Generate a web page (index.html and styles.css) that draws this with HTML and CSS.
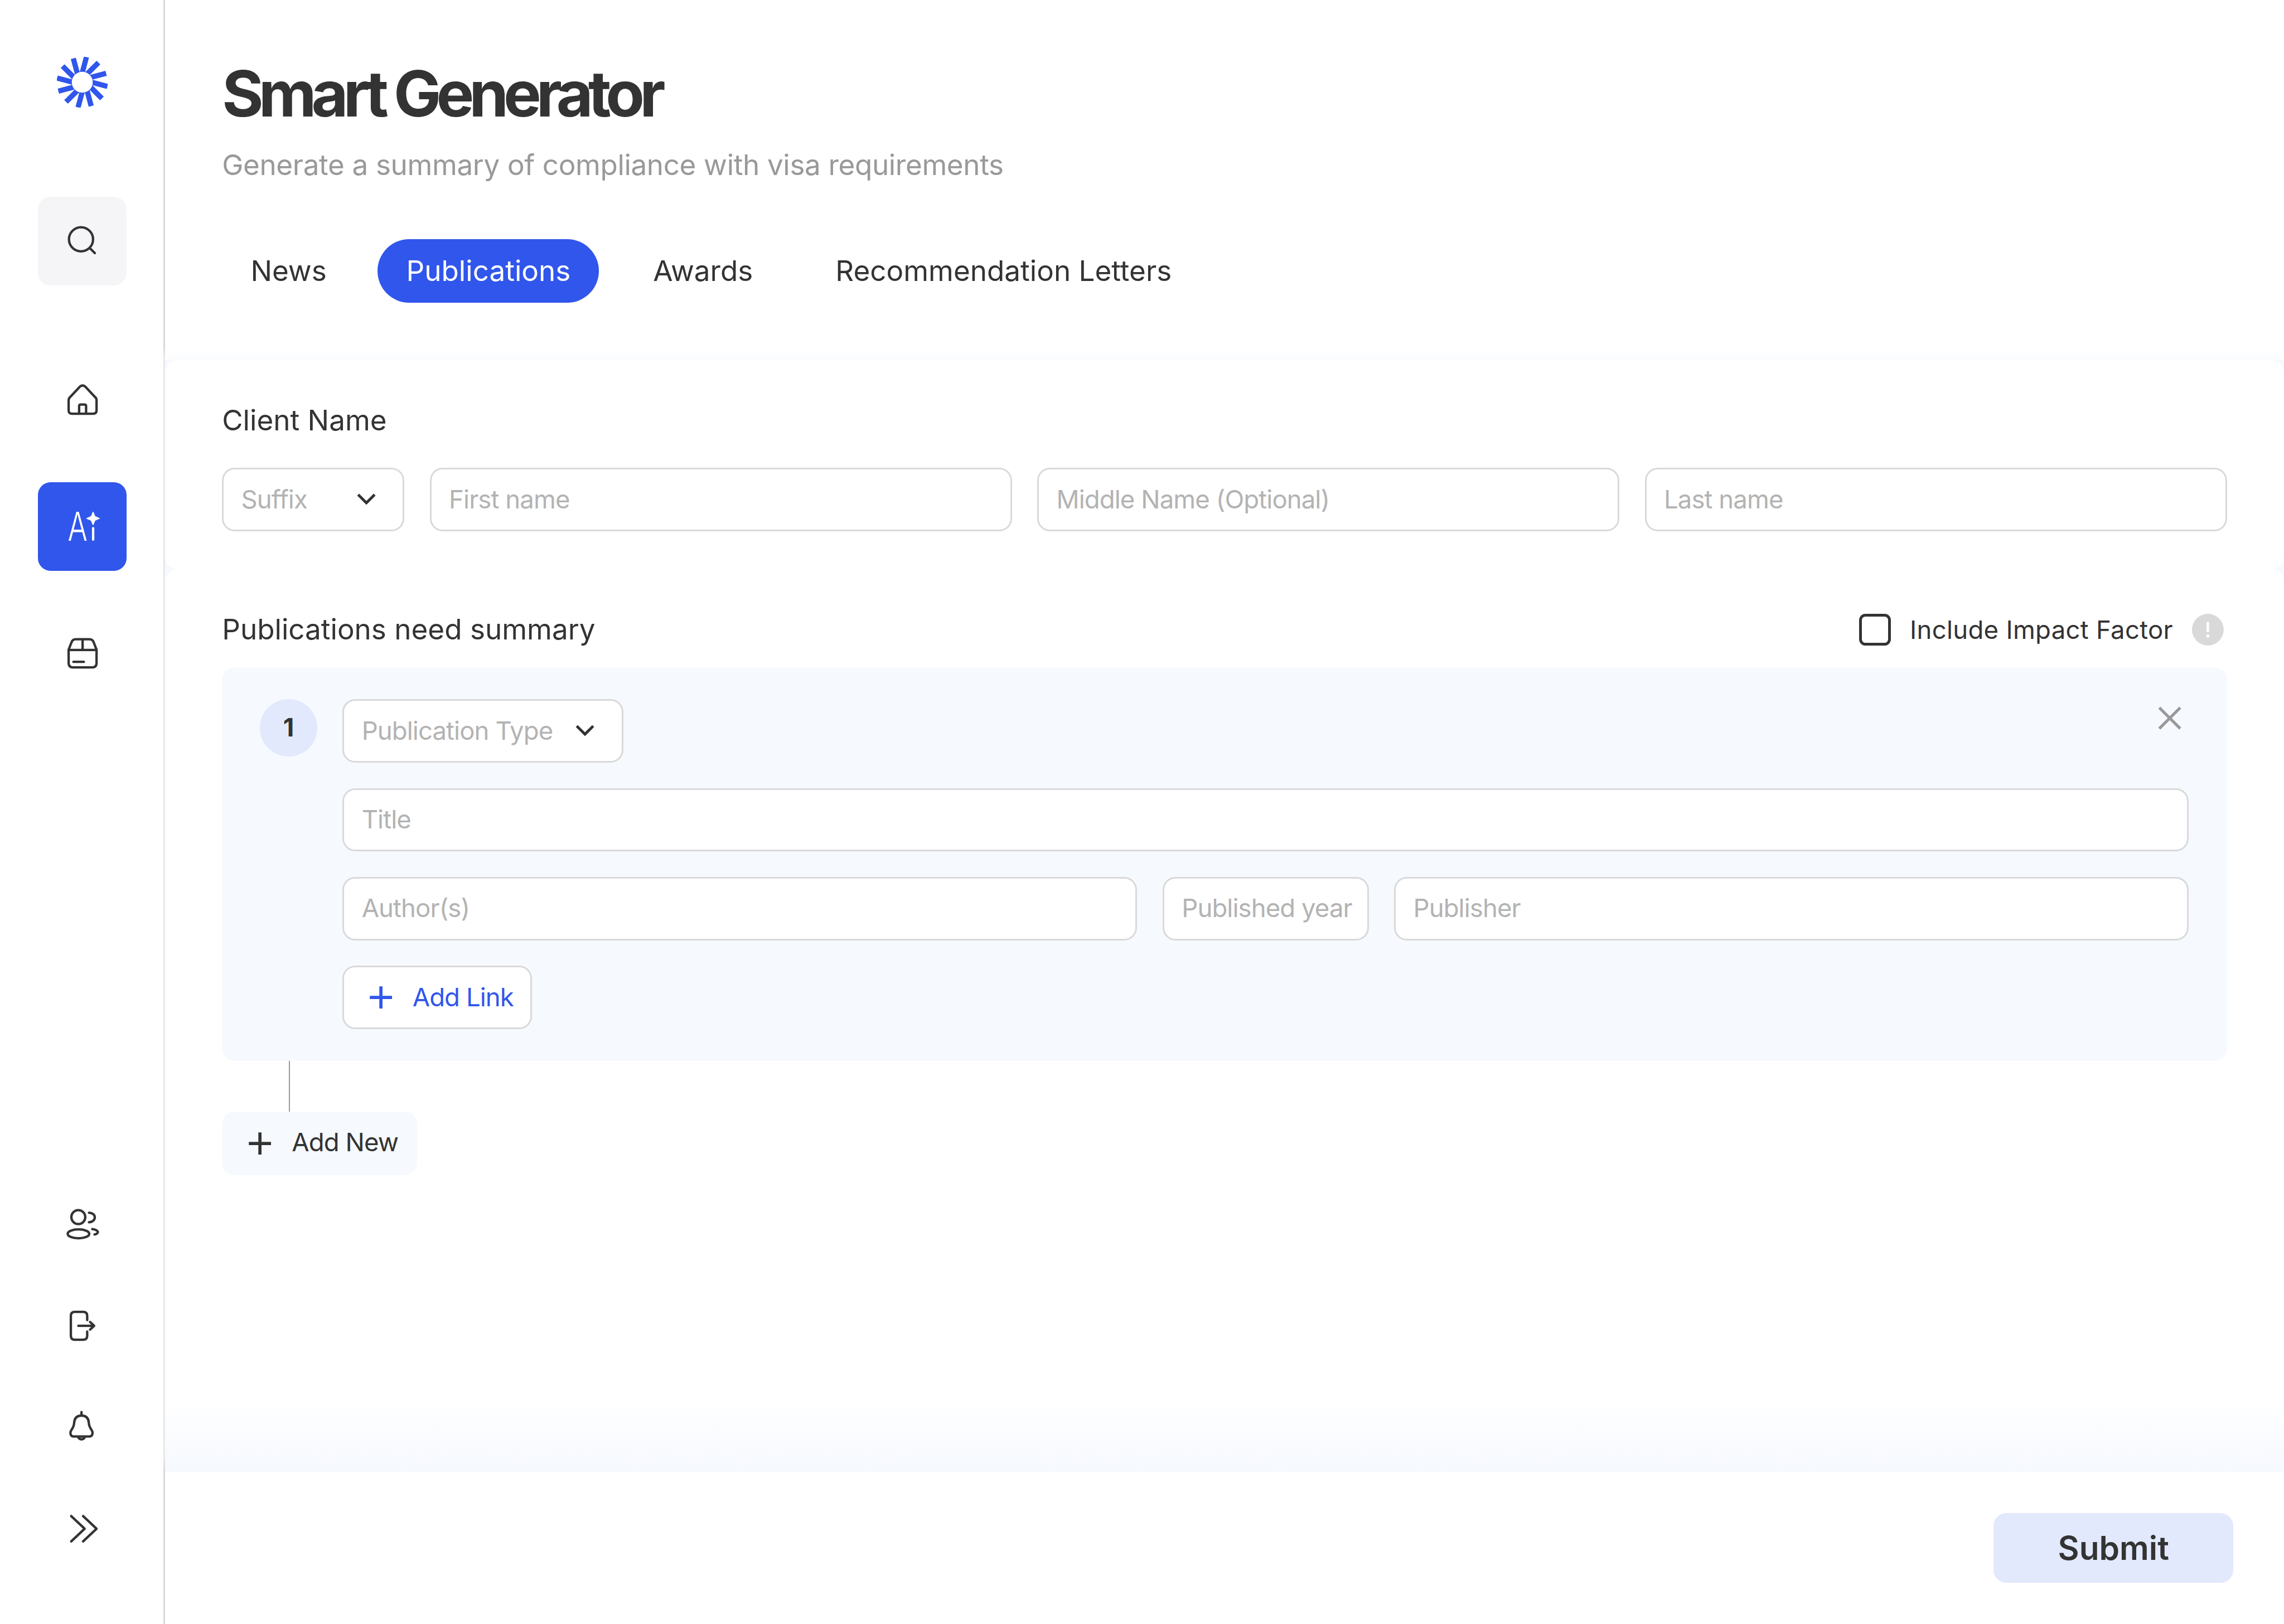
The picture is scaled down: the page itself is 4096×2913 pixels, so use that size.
FILE: index.html
```html
<!DOCTYPE html>
<html lang="en">
<head>
<meta charset="utf-8">
<title>Smart Generator</title>
<link rel="stylesheet" href="styles.css">
</head>
<body>
<div class="app">
  <aside class="sidebar">
    <div class="logo">
      <svg viewBox="-16 -16 32 32" width="32" height="32">
        <g fill="#3056eb">
          <rect x="-3.2" y="-16" width="3.3" height="12" transform="rotate(15)"/>
          <rect x="-3.2" y="-16" width="3.3" height="12" transform="rotate(45)"/>
          <rect x="-3.2" y="-16" width="3.3" height="12" transform="rotate(75)"/>
          <rect x="-3.2" y="-16" width="3.3" height="12" transform="rotate(105)"/>
          <rect x="-3.2" y="-16" width="3.3" height="12" transform="rotate(135)"/>
          <rect x="-3.2" y="-16" width="3.3" height="12" transform="rotate(165)"/>
          <rect x="-3.2" y="-16" width="3.3" height="12" transform="rotate(195)"/>
          <rect x="-3.2" y="-16" width="3.3" height="12" transform="rotate(225)"/>
          <rect x="-3.2" y="-16" width="3.3" height="12" transform="rotate(255)"/>
          <rect x="-3.2" y="-16" width="3.3" height="12" transform="rotate(285)"/>
          <rect x="-3.2" y="-16" width="3.3" height="12" transform="rotate(315)"/>
          <rect x="-3.2" y="-16" width="3.3" height="12" transform="rotate(345)"/>
        </g>
        <circle r="6.6" fill="#fff"/>
      </svg>
    </div>
    <div class="side-btn search-btn">
      <svg class="icon" viewBox="0 0 24 24"><circle cx="11" cy="11" r="7.6"/><path d="M16.7 16.7L19.7 19.7"/></svg>
    </div>
    <nav class="side-nav">
      <div class="side-btn">
        <svg class="icon" viewBox="0 0 24 24"><path d="M3.2 18.6V12.2Q3.2 10.9 4.3 10.1L10.4 3.6Q12 2.4 13.6 3.6L19.7 10.1Q20.8 10.9 20.8 12.2V18.6Q20.8 20.8 18.6 20.8H5.4Q3.2 20.8 3.2 18.6Z"/><path d="M9.8 20.8V16Q9.8 15 10.8 15H13.2Q14.2 15 14.2 16V20.8"/></svg>
      </div>
      <div class="side-btn side-btn-active">
        <div class="ai-mark">
          <span class="ai-letter">A</span>
          <svg class="ai-spark" viewBox="0 0 24 24">
            <rect x="17.9" y="12.5" width="1.5" height="8.5" rx=".5" fill="#fff"/>
            <path d="M18.6 3L19.8 5.8 22.6 7 19.8 8.2 18.6 11 17.4 8.2 14.6 7 17.4 5.8Z" fill="#fff" stroke="#fff" stroke-width=".5" stroke-linejoin="round"/>
          </svg>
        </div>
      </div>
      <div class="side-btn">
        <svg class="icon" viewBox="0 0 24 24"><path d="M3.2 9.6L5 5Q5.7 3 7.6 3H16.4Q18.3 3 19 5L20.8 9.6V18Q20.8 20.8 18 20.8H6Q3.2 20.8 3.2 18Z"/><path d="M3.2 9.8H20.8M12 3V9.8M6.2 17.3H12.8"/></svg>
      </div>
    </nav>
    <div class="side-bottom">
      <svg class="icon" viewBox="0 0 24 24"><circle cx="10" cy="7.4" r="4.4"/><ellipse cx="10.1" cy="18" rx="6.8" ry="2.8"/><path d="M16.7 4.7C19 4.7 20.4 6 20.4 7.6S19 10.6 16.7 10.7"/><path d="M18.8 15C20.8 15.2 22.3 16 22.3 16.9S21.3 18.2 20.2 18.4"/></svg>
      <svg class="icon" viewBox="0 0 24 24"><path d="M15.6 8.4V5.6Q15.6 3.2 13 3.2H7.8Q5.3 3.2 5.3 5.6V18.4Q5.3 20.8 7.8 20.8H13Q15.6 20.8 15.6 18.4V15.6"/><path d="M10 12H19.8M17.4 9.6L20 12L17.4 14.4"/></svg>
      <svg class="icon" viewBox="0 0 24 24"><path d="M12 2.4V4.6"/><path d="M12 4.6C8.8 4.6 7.6 6.6 7.4 9C7.3 11 6.6 12.4 5.6 13.8C4.6 15.2 4.9 17.8 7 17.8H17C19.1 17.8 19.4 15.2 18.4 13.8C17.4 12.4 16.7 11 16.6 9C16.4 6.6 15.2 4.6 12 4.6Z"/><path d="M10 18.4C10.6 20 13.4 20 14 18.4"/></svg>
      <svg class="icon" viewBox="0 0 24 24"><path d="M5.5 4L14 12L5.5 20M13 4L21.5 12L13 20"/></svg>
    </div>
  </aside>

  <main class="main">
    <header class="header">
      <h1 class="title">Smart Generator</h1>
      <p class="subtitle">Generate a summary of compliance with visa requirements</p>
      <div class="tabs">
        <span class="tab tab-first">News</span>
        <span class="tab tab-active">Publications</span>
        <span class="tab">Awards</span>
        <span class="tab">Recommendation Letters</span>
      </div>
    </header>

    <div class="content">
      <section class="section">
        <div class="section-head"><h2 class="label">Client Name</h2></div>
        <div class="row row-name">
          <div class="field select"><span>Suffix</span><svg class="chev" viewBox="0 0 12 7"><path d="M.8.8L6 6 11.2.8"/></svg></div>
          <div class="field"><span>First name</span></div>
          <div class="field"><span>Middle Name (Optional)</span></div>
          <div class="field"><span>Last name</span></div>
        </div>
      </section>

      <section class="section section-fill">
        <div class="section-head">
          <h2 class="label">Publications need summary</h2>
          <div class="impact">
            <span class="check"></span>
            <span class="impact-text">Include Impact Factor</span>
            <svg class="info" viewBox="0 0 20 20"><circle cx="10" cy="10" r="10" fill="#d9d9d9"/><rect x="9.2" y="5" width="1.6" height="6.6" rx=".8" fill="#fff"/><circle cx="10" cy="14" r="1" fill="#fff"/></svg>
          </div>
        </div>

        <div class="card">
          <span class="num">1</span>
          <div class="card-body">
            <div class="card-top">
              <div class="field select select-type"><span>Publication Type</span><svg class="chev" viewBox="0 0 12 7"><path d="M.8.8L6 6 11.2.8"/></svg></div>
              <svg class="close" viewBox="0 0 24 24"><path d="M5.4 5.4L18.6 18.6M18.6 5.4L5.4 18.6"/></svg>
            </div>
            <div class="field"><span>Title</span></div>
            <div class="row row-pub">
              <div class="field"><span>Author(s)</span></div>
              <div class="field"><span>Published year</span></div>
              <div class="field"><span>Publisher</span></div>
            </div>
            <div class="add-link">
              <svg class="plus" viewBox="0 0 24 24"><path d="M12 5V19M5 12H19"/></svg>
              <span>Add Link</span>
            </div>
          </div>
        </div>

        <div class="connector"></div>
        <div class="add-new">
          <svg class="plus" viewBox="0 0 24 24"><path d="M12 5V19M5 12H19"/></svg>
          <span class="add-new-text">Add New</span>
        </div>
      </section>
    </div>

    <footer class="footer">
      <button class="submit" type="button">Submit</button>
    </footer>
  </main>
</div>
</body>
</html>
```
FILE: styles.css
```css
* { box-sizing: border-box; }
html, body { margin: 0; padding: 0; background: #fff; }
body { overflow: hidden; }

.app {
  zoom: 2.84444;
  display: flex;
  width: 1440px;
  height: 1024.1px;
  font-family: "Inter", "Liberation Sans", sans-serif;
  color: #333;
}

/* sidebar */
.sidebar {
  flex: 0 0 104px;
  display: flex;
  flex-direction: column;
  align-items: center;
  padding: 36px 0 48px 1px;
  border-right: 1.06px solid #d9d9d9;
}
.logo { width: 32px; height: 32px; }
.logo svg { display: block; }
.side-btn {
  width: 56px;
  height: 56px;
  border-radius: 8px;
  display: flex;
  align-items: center;
  justify-content: center;
}
.search-btn { margin-top: 56px; background: #f5f5f7; }
.side-btn-active { background: #3056eb; }
.side-nav { margin-top: 44px; display: flex; flex-direction: column; gap: 24px; }
.side-bottom { margin-top: auto; margin-left: -1px; display: flex; flex-direction: column; gap: 40px; }
.icon {
  display: block;
  width: 24px;
  height: 24px;
  fill: none;
  stroke: #333;
  stroke-width: 1.5;
  stroke-linecap: round;
  stroke-linejoin: round;
}
.ai-mark { position: relative; width: 24px; height: 24px; }
.ai-letter {
  display: block;
  width: 24px;
  font-size: 25px;
  font-weight: 300;
  line-height: 24px;
  color: #fff;
  transform: translateX(2.6px) scaleX(.74);
  transform-origin: left center;
}
.ai-spark { position: absolute; inset: 0; width: 24px; height: 24px; }

/* main */
.main { flex: 1; display: flex; flex-direction: column; min-width: 0; }
.header { padding: 35px 36px 36px; }
.title {
  margin: 0;
  font-size: 40px;
  line-height: 48px;
  font-weight: 700;
  letter-spacing: -3.15px;
  color: #333;
}
.subtitle {
  margin: 7px 0 0;
  font-size: 18px;
  line-height: 28px;
  letter-spacing: -.13px;
  color: #999;
}
.tabs { display: flex; gap: 16px; margin-top: 33px; }
.tab {
  height: 40px;
  padding: 0 18px;
  border-radius: 20px;
  font-size: 18px;
  line-height: 40px;
  color: #333;
}
.tab-first { padding-right: 16.2px; }
.tab-active { background: #3056eb; color: #fff; }

.content {
  flex: 1;
  display: flex;
  flex-direction: column;
  background: #f6f9fe;
  box-shadow: 0 -5px 5px #fcfdfe;
}
.section { padding: 24px 36px; background: #fff; border-radius: 8px; }
.section-fill {
  flex: 1;
  padding-bottom: 0;
  border-radius: 8px 8px 0 0;
  background: linear-gradient(to bottom, #fff calc(100% - 46px), #f6f9fe 100%);
}
.section-head {
  display: flex;
  align-items: center;
  justify-content: space-between;
  height: 28px;
}
.label { margin: 0; font-size: 18px; line-height: 28px; font-weight: 400; color: #333; }

.row { display: grid; gap: 16px; }
.row-name { grid-template-columns: 115px 1fr 1fr 1fr; margin-top: 16px; }
.row-pub { grid-template-columns: 1fr 130px 1fr; }

.field {
  display: flex;
  align-items: center;
  justify-content: space-between;
  height: 40px;
  padding: 0 11px .6px;
  background: #fff;
  border: 1.06px solid #d9d9d9;
  border-radius: 8px;
  font-size: 16px;
  letter-spacing: -.32px;
  color: #b3b3b3;
  white-space: nowrap;
}
.select { padding-right: 17px; }
.select-type { width: 177px; }
.chev { display: block; width: 12px; height: 7px; fill: none; stroke: #333; stroke-width: 1.7; }

.impact { display: flex; align-items: center; }
.check { width: 20px; height: 20px; border: 1.8px solid #333; border-radius: 4px; }
.impact-text { margin-left: 12px; font-size: 16px; letter-spacing: .1px; color: #333; }
.info { display: block; width: 20px; height: 20px; margin-left: 12px; margin-right: 2px; }

.card {
  display: flex;
  gap: 16px;
  margin-top: 10px;
  padding: 20px 24px;
  background: #f6f9fe;
  border-radius: 8px;
}
.num {
  flex: 0 0 36px;
  height: 36px;
  border-radius: 50%;
  background: #e3e9fc;
  font-size: 16px;
  font-weight: 700;
  line-height: 36px;
  text-align: center;
}
.card-body { flex: 1; display: flex; flex-direction: column; gap: 16px; min-width: 0; }
.card-top { display: flex; justify-content: space-between; align-items: flex-start; }
.close { display: block; width: 24px; height: 24px; fill: none; stroke: #999; stroke-width: 1.8; }

.add-link, .add-new {
  display: flex;
  align-items: center;
  gap: 8px;
  align-self: flex-start;
  height: 40px;
  padding: 0 12px;
  border-radius: 8px;
  font-size: 16px;
  letter-spacing: -.32px;
}
.add-link { background: #fff; border: 1.06px solid #d9d9d9; color: #3056eb; padding: 0 10.6px 0 11px; }
.add-new { width: max-content; background: #f6f9fe; color: #333; }
.add-new-text { padding-bottom: 1.4px; }
.plus { display: block; width: 24px; height: 24px; fill: none; stroke: currentColor; stroke-width: 2; }

.connector { width: .8px; height: 32px; margin-left: 42px; background: #999; }

.footer { display: flex; justify-content: flex-end; height: 96px; padding: 26px 32px 0; }
.submit {
  width: 151px;
  height: 44px;
  padding: 0;
  border: 0;
  border-radius: 8px;
  background: #e3e9fc;
  font-family: inherit;
  font-size: 20.6px;
  font-weight: 600;
  color: #333;
}
```
